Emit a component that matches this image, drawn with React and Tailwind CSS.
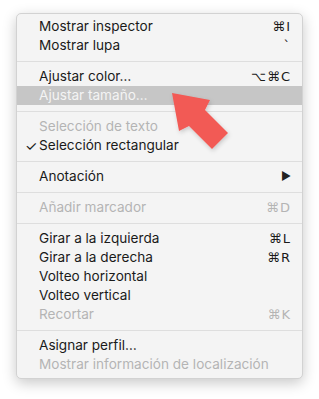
import React from "react";

const groups = [
  [
    { label: "Mostrar inspector", key: "⌘I" },
    { label: "Mostrar lupa", key: "`" },
  ],
  [
    { label: "Ajustar color…", key: "⌥⌘C" },
    { label: "Ajustar tamaño…", active: true },
  ],
  [
    { label: "Selección de texto", disabled: true },
    { label: "Selección rectangular", checked: true },
  ],
  [{ label: "Anotación", submenu: true }],
  [{ label: "Añadir marcador", key: "⌘D", disabled: true }],
  [
    { label: "Girar a la izquierda", key: "⌘L" },
    { label: "Girar a la derecha", key: "⌘R" },
    { label: "Volteo horizontal" },
    { label: "Volteo vertical" },
    { label: "Recortar", key: "⌘K", disabled: true },
  ],
  [
    { label: "Asignar perfil…" },
    { label: "Mostrar información de localización", disabled: true },
  ],
];

const MenuItem = ({ item }) => {
  let color = "text-[#1a1a1a]";
  if (item.disabled) color = "text-[#b4b4b4]";
  if (item.active) color = "text-[#f4f4f4]";
  return (
    <div
      className={`relative flex h-[19px] items-center pl-[22px] pr-[11px] ${color} ${
        item.active ? "bg-[#c6c6c6]" : ""
      }`}
    >
      {item.checked && (
        <span className="absolute left-[8px] top-[-1px] text-[14px]">✓</span>
      )}
      <span className="flex-1 whitespace-nowrap">{item.label}</span>
      {item.key && (
        <span className="font-['DejaVu_Sans',sans-serif] text-[13px] tracking-[1px]">
          {item.key}
        </span>
      )}
      {item.submenu && <span className="text-[11px] text-[#222]">▶</span>}
    </div>
  );
};

const Arrow = () => (
  <svg
    className="pointer-events-none absolute left-0 top-0"
    width="319"
    height="399"
    viewBox="0 0 319 399"
  >
    <defs>
      <filter id="sh" x="-30%" y="-30%" width="160%" height="160%">
        <feDropShadow dx="1" dy="2" stdDeviation="2" floodColor="#000" floodOpacity="0.18" />
      </filter>
    </defs>
    <polygon
      points="172,93 210,100 205,110 228,133 212,149 189,126 179,131"
      fill="#f25a55"
      filter="url(#sh)"
    />
  </svg>
);

const App = () => {
  return (
    <div className="relative h-[399px] w-[319px] overflow-hidden bg-white font-['Inter',sans-serif] text-[13.6px]">
      <div className="ml-[16px] mt-[13px] w-[287px] rounded-[5px] border border-[#d2d2d2] bg-[#f4f4f4] pb-[4px] pt-[3px] shadow-[0_4px_14px_rgba(0,0,0,0.22)]">
        {groups.map((g, gi) => (
          <div key={gi}>
            {gi > 0 && (
              <div className="flex h-[12px] items-center">
                <div className="h-px w-full bg-[#dedede]" />
              </div>
            )}
            {g.map((item, i) => (
              <MenuItem key={i} item={item} />
            ))}
          </div>
        ))}
      </div>
      <Arrow />
    </div>
  );
};

export default App;
